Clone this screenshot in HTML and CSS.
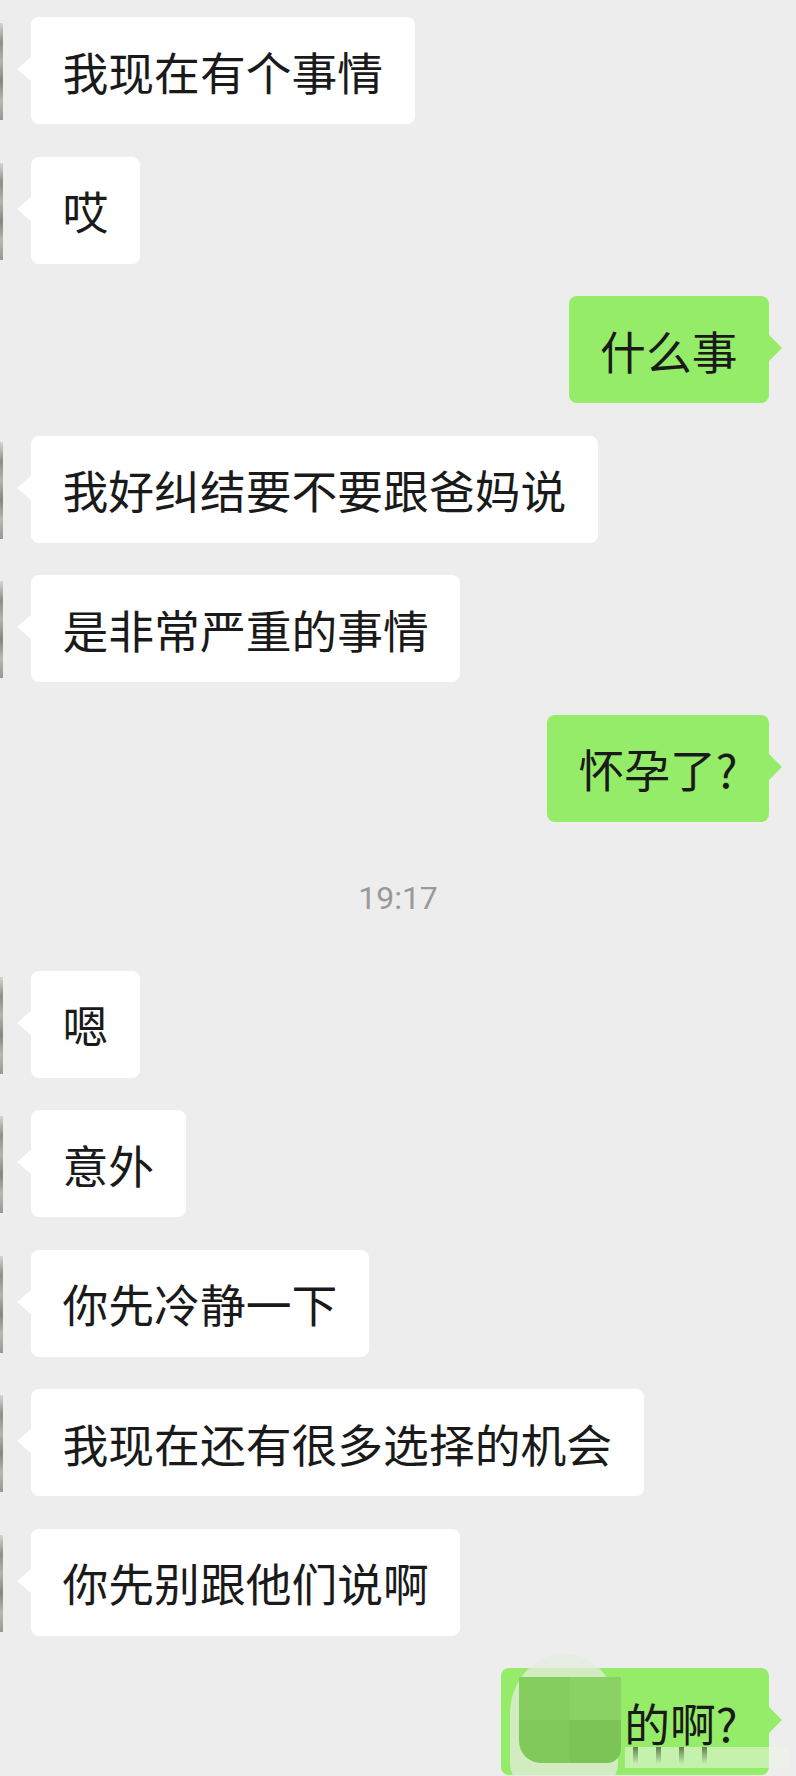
FILE: index.html
```html
<!DOCTYPE html>
<html lang="zh-CN">
<head>
<meta charset="utf-8">
<title>聊天</title>
<link rel="stylesheet" href="styles.css">
</head>
<body>
<main class="chat">
  <div class="row left"><span class="av"></span><div class="bubble in">我现在有个事情</div></div>
  <div class="row left"><span class="av"></span><div class="bubble in">哎</div></div>
  <div class="row right"><div class="bubble out">什么事</div></div>
  <div class="row left"><span class="av"></span><div class="bubble in">我好纠结要不要跟爸妈说</div></div>
  <div class="row left"><span class="av"></span><div class="bubble in">是非常严重的事情</div></div>
  <div class="row right"><div class="bubble out">怀孕了?</div></div>
  <div class="ts">19:17</div>
  <div class="row left"><span class="av"></span><div class="bubble in">嗯</div></div>
  <div class="row left"><span class="av"></span><div class="bubble in">意外</div></div>
  <div class="row left"><span class="av"></span><div class="bubble in">你先冷静一下</div></div>
  <div class="row left"><span class="av"></span><div class="bubble in">我现在还有很多选择的机会</div></div>
  <div class="row left"><span class="av"></span><div class="bubble in">你先别跟他们说啊</div></div>
  <div class="row right">
    <div class="bubble out blurred">
      <span class="hidden-words"><span class="blob"></span><span class="mosaic"><i></i><i></i><i></i><i></i></span></span>的啊?
      <span class="smear"><i></i><i></i><i></i><i></i></span>
    </div>
  </div>
</main>
</body>
</html>
```

FILE: styles.css
```css
html, body {
  margin: 0;
  padding: 0;
}
body {
  width: 796px;
  height: 1776px;
  overflow: hidden;
  background: #ededed;
  font-family: "Noto Sans CJK SC", "Noto Sans", sans-serif;
}
.chat {
  display: flex;
  flex-direction: column;
  gap: 32.5px;
  padding-top: 17px;
}
.row {
  display: flex;
  align-items: flex-start;
}
.row.right {
  justify-content: flex-end;
  padding-right: 27px;
}
.av {
  width: 3px;
  height: 97px;
  margin-top: 6px;
  margin-right: 28px;
  background: linear-gradient(180deg, #d6d6d0 0%, #8f8f8a 20%, #b4b4ae 40%, #858681 60%, #b8b8b1 80%, #979892 100%);
}
.bubble {
  position: relative;
  height: 107px;
  box-sizing: border-box;
  padding: 22.5px 31.5px;
  font-size: 45.8px;
  line-height: 62px;
  color: #1a1a1a;
  border-radius: 8px;
  white-space: nowrap;
}
.bubble.in {
  background: #ffffff;
}
.bubble.out {
  background: #95ec69;
}
.bubble.in::before {
  content: "";
  position: absolute;
  left: -14px;
  top: 40px;
  border-right: 14px solid #ffffff;
  border-top: 12px solid transparent;
  border-bottom: 12px solid transparent;
}
.bubble.out::after {
  content: "";
  position: absolute;
  right: -13px;
  top: 39px;
  border-left: 13px solid #95ec69;
  border-top: 13px solid transparent;
  border-bottom: 13px solid transparent;
}
.ts {
  height: 84px;
  box-sizing: border-box;
  padding-top: 5px;
  line-height: 79px;
  text-align: center;
  font-family: Roboto, "Noto Sans", sans-serif;
  font-size: 32px;
  color: #999999;
}
.hidden-words {
  display: inline-block;
  width: 2em;
  height: 1em;
}
.blob {
  position: absolute;
  left: 9px;
  top: -14px;
  width: 108px;
  height: 140px;
  border-radius: 54px 54px 40px 40px / 60px 60px 30px 30px;
  background: rgba(230, 236, 222, 0.75);
}
.mosaic {
  position: absolute;
  left: 18px;
  top: 9px;
  width: 102px;
  height: 86px;
  display: grid;
  grid-template-columns: 1fr 1fr;
  grid-template-rows: 1fr 1fr;
  border-radius: 0 0 14px 22px;
  overflow: hidden;
}
.mosaic i:nth-child(1) { background: #86cd60; }
.mosaic i:nth-child(2) { background: #8ad264; }
.mosaic i:nth-child(3) { background: #80c85a; }
.mosaic i:nth-child(4) { background: #7cc457; }
.smear {
  position: absolute;
  left: 124px;
  top: 79px;
  width: 156px;
  height: 21px;
  display: flex;
  gap: 18px;
  padding-left: 8px;
  background: rgba(235, 245, 225, 0.55);
}
.smear i {
  width: 5px;
  height: 17px;
  background: linear-gradient(180deg, rgba(20, 30, 10, 0.55), rgba(20, 30, 10, 0));
}
```
